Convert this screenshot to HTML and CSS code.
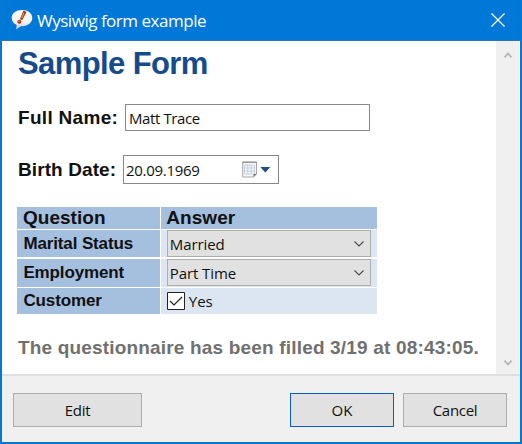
FILE: index.html
```html
<!DOCTYPE html>
<html lang="en">
<head>
<meta charset="utf-8">
<title>Wysiwig form example</title>
<link rel="stylesheet" href="styles.css">
</head>
<body>
<div class="window">
  <header class="titlebar">
    <svg class="app-icon" width="22" height="22" viewBox="0 0 22 22">
      <defs><linearGradient id="bubble" x2="0" y2="1"><stop offset="0" stop-color="#fff"/><stop offset=".65" stop-color="#f1f1f1"/><stop offset="1" stop-color="#b9bfc5"/></linearGradient></defs>
      <path d="M11 1C5 1 .7 4.400.7 9c0 3 2 5.700 5 7l-.7 4.500 5-3.200C16.500 17.300 21.300 13.700 21.300 9 21.300 4.400 17 1 11 1Z" fill="url(#bubble)"/>
      <path d="M12.300 1.700l3.300 1.100-4.400 8.200-2.200-.800Z" fill="#a62a12"/>
      <path d="M12.900 3.500l-2.100 5.500" stroke="#ee9b28" stroke-width="1.200"/>
      <circle cx="8.300" cy="12.800" r="2" fill="#bd2814"/>
      <circle cx="8" cy="12.300" r=".8" fill="#f5ad37"/>
    </svg>
    <span class="title">Wysiwig form example</span>
    <svg class="close" width="14" height="14" viewBox="0 0 14 14"><path d="M.5.5l13 13M13.500.5l-13 13" stroke="#fff" stroke-width="1.300"/></svg>
  </header>
  <main class="content">
    <form class="form">
      <h1><span>Sample Form</span></h1>
      <div class="field name"><label>Full Name:</label><div class="box text">Matt Trace</div></div>
      <div class="field birth"><label>Birth Date:</label><div class="box date"><span>20.09.1969</span>
        <svg class="calendar" width="29" height="18" viewBox="0 0 29 18">
          <path d="M.7 1h13.800v12l-3 3H.7Z" fill="#f7f8fb" stroke="#aaa3a4"/>
          <path d="M.3 1.300h14.500" stroke="#8e8584"/>
          <path d="M2.500 4h10v9h-10ZM5.800 4v9M9.200 4v9M2.500 7h10M2.500 10h10" fill="none" stroke="#b9c5d8" stroke-width=".8"/>
          <path d="M11.500 16v-3h3Z" fill="#777171"/>
          <path d="M18.300 6h10l-5 5.500Z" fill="#204d83"/>
        </svg></div></div>
      <div class="table">
        <div class="cell head"><span>Question</span></div><div class="cell head answer"><span>Answer</span></div>
        <div class="cell key marital"><span>Marital Status</span></div>
        <div class="cell value"><div class="select"><span class="married">Married</span><svg width="10" height="6" viewBox="0 0 10 6"><path d="M.5.5L5 5 9.500.5" fill="none" stroke="#4a4a4a" stroke-width="1.100"/></svg></div></div>
        <div class="cell key employment"><span>Employment</span></div>
        <div class="cell value"><div class="select"><span class="part">Part Time</span><svg width="10" height="6" viewBox="0 0 10 6"><path d="M.5.5L5 5 9.500.5" fill="none" stroke="#4a4a4a" stroke-width="1.100"/></svg></div></div>
        <div class="cell key customer"><span>Customer</span></div>
        <div class="cell value check"><svg width="18" height="18" viewBox="0 0 18 18"><path d="M.5.5h17v17H.5Z" fill="#fff" stroke="#222"/><path d="M3 9l4 4 8-8" fill="none" stroke="#222" stroke-width="1.200"/></svg><span>Yes</span></div>
      </div>
      <p class="status"><span>The questionnaire has been filled 3/19 at 08:43:05.</span></p>
    </form>
    <div class="scrollbar">
      <svg width="8" height="6" viewBox="0 0 8 6"><path d="M.5 5.300L4 1.500l3.500 3.800" fill="none" stroke="#b3b3b3" stroke-width="1.800"/></svg>
      <svg width="8" height="6" viewBox="0 0 8 6"><path d="M.5.700L4 4.500 7.500.7" fill="none" stroke="#b3b3b3" stroke-width="1.800"/></svg>
    </div>
  </main>
  <footer class="footer">
    <div class="button edit">Edit</div><div class="button ok">OK</div><div class="button cancel">Cancel</div>
  </footer>
</div>
</body>
</html>
```
FILE: styles.css
```css
* { box-sizing: border-box; }
body { margin: 0; font-family: "Open Sans", sans-serif; color: #111; font-size: 15px; }
.window { width: 522px; height: 444px; display: flex; flex-direction: column; background: #fff; border: solid #0877d3; border-width: 0 2px 2px; overflow: hidden; white-space: nowrap; }
.titlebar { height: 41px; flex: none; display: flex; align-items: center; background: #0078d7; border-bottom: 1px solid #2c73b8; padding: 0 15.500px 0 9px; color: #fff; }
.app-icon { margin-top: -1px; }
.title { font-size: 17px; letter-spacing: -.48px; margin-left: 4px; line-height: 24px; padding-top: 2px; }
.close { margin-left: auto; }
.content { height: 333px; flex: none; display: flex; }
.form { width: 494px; padding-left: 16px; font-family: "Liberation Sans", sans-serif; font-weight: bold; }
h1 { margin: 5px 0 0; height: 34px; line-height: 36px; font-size: 31px; letter-spacing: -.6px; color: #164b8b; }
.field { display: flex; align-items: center; font-size: 19px; }
.name { margin-top: 24px; height: 27px; }
.birth { margin-top: 24px; height: 29px; }
.name label { width: 107px; letter-spacing: .3px; }
.birth label { width: 105px; letter-spacing: .1px; }
.box { height: 100%; border: 1px solid #888; background: #fff; padding-left: 3px; display: flex; align-items: center; font: 15px "Open Sans", sans-serif; }
.text { width: 245px; letter-spacing: -.4px; }
.date { width: 156px; padding-left: 2px; padding-right: 7px; letter-spacing: -.3px; }
.calendar { margin-left: auto; }
.table { margin: 23px 0 0 -.6px; width: 360px; height: 107px; display: grid; grid-template-columns: 142.400px 216.600px; grid-template-rows: 22px 27px 28px 26px; column-gap: 1px; row-gap: 1.33px; }
.cell { background: #a5bfdf; padding-left: 6px; display: flex; align-items: center; font-size: 17px; }
.head { font-size: 19px; padding-left: 5.500px; letter-spacing: .05px; }
.key { letter-spacing: -.13px; }
.marital { padding-top: 1px; }
.value { background: #dce6f2; font: 15px "Open Sans", sans-serif; }
.select { width: 204px; height: 27px; background: #e1e1e1; border: 1px solid #adadad; display: flex; align-items: center; justify-content: space-between; padding: 0 6px 0 2px; }
.select span { padding-top: 1px; letter-spacing: -.1px; }
.check { gap: 4px; }
.status { margin: 22px 0 0; height: 24px; line-height: 24px; font-size: 19px; letter-spacing: .175px; color: #707070; }
.scrollbar { width: 23px; background: #f0f0f0; display: flex; flex-direction: column; align-items: center; justify-content: space-between; padding: 11px 0 8px; }
.footer { flex: 1; border-top: 2px solid #dfdfdf; background: #f0f0f0; display: flex; padding: 17px 13px 0 11px; }
.button { height: 34px; background: #e1e1e1; border: 1px solid #adadad; display: flex; align-items: center; justify-content: center; }
.edit { width: 129px; letter-spacing: -.3px; }
.ok { width: 104px; margin-left: auto; border: 1.5px solid #075bd3; }
.cancel { width: 104px; margin-left: 9px; letter-spacing: -.3px; }
```
